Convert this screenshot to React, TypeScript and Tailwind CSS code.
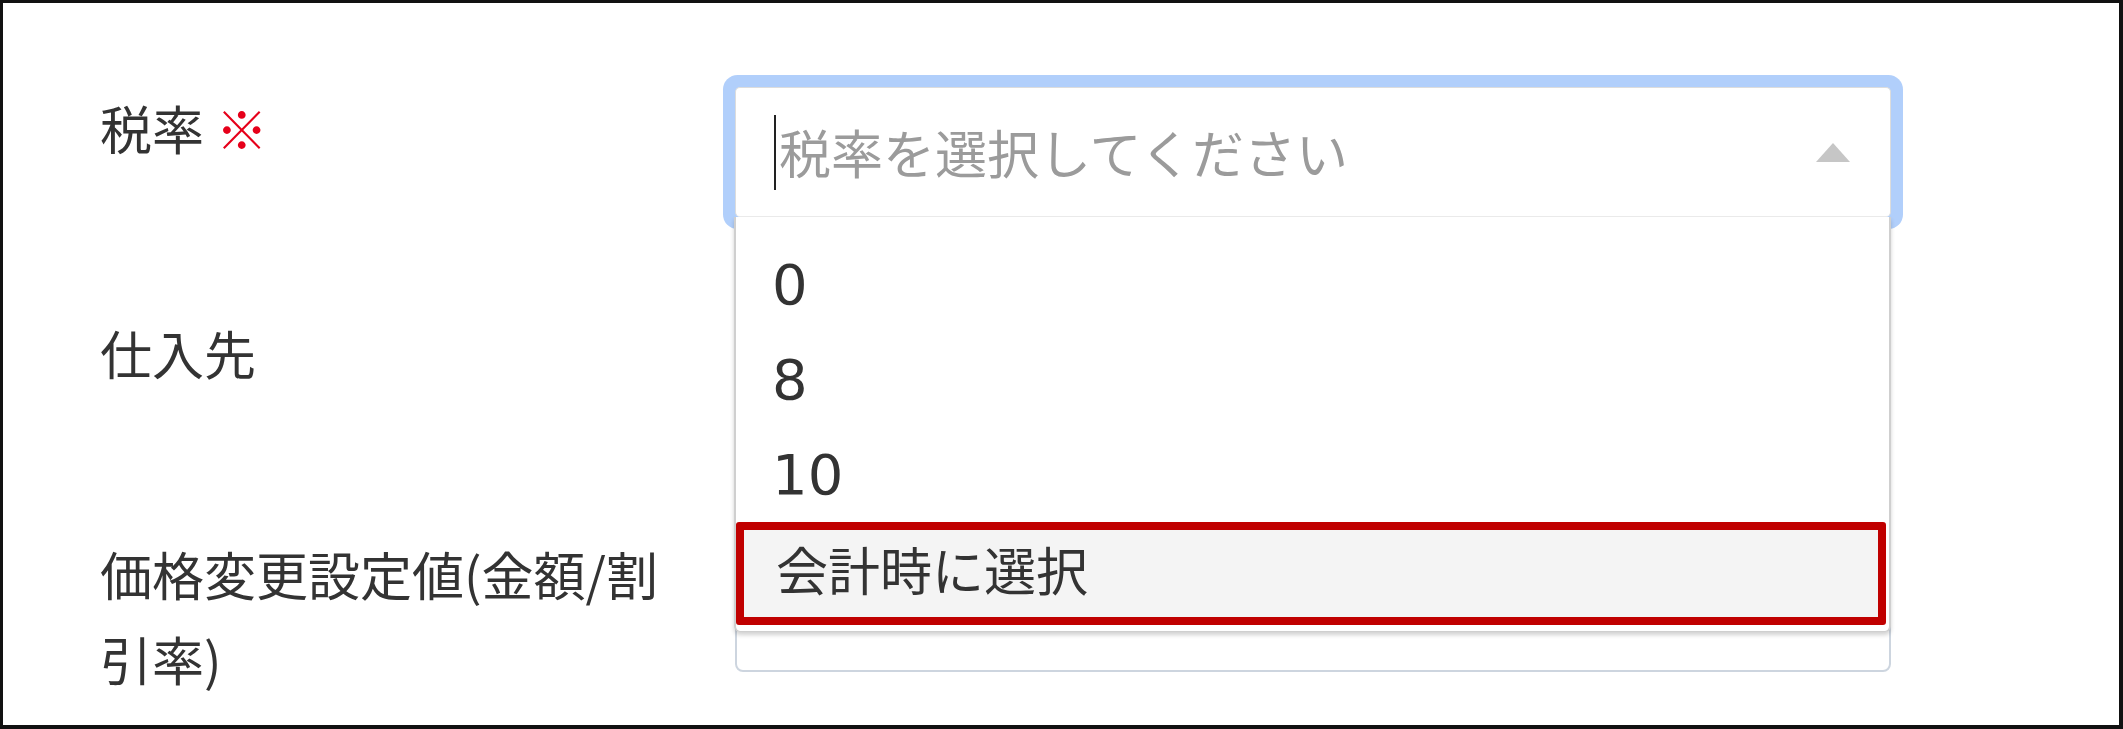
import React from 'react';

const options = ['0', '8', '10'];

/**
 * Tax rate form with its select open.
 */
export default function App() {
	return (
		<div className="w-[2123px] h-[729px] bg-white border-[3px] border-r-4 border-b-4 border-[#111] overflow-hidden font-['Noto_Sans_CJK_JP',sans-serif] text-[52px] text-[#333]">
			<div className="flex flex-col gap-[97.5px] pt-[84px] pl-[97px]">
				{/* Tax rate row. */}
				<div className="flex items-start">
					<label className="w-[635px] shrink-0 leading-[85px] mt-[-2px]">
						税率 <span className="text-[#e6001a]">※</span>
					</label>
					<div className="relative w-[1156px] h-[130px]">
						<div className="h-full flex items-center pl-[38px] pr-[40px] bg-white border border-[#dcdcdc] border-b-[#ececec] rounded-[5px] shadow-[0_0_0_12px_#b1cffb]">
							<span className="w-[2px] h-[75px] bg-[#222] shrink-0" />
							<span className="ml-[3px] flex-1 text-[#9b9b9b] leading-none">税率を選択してください</span>
							<svg width="34" height="19" viewBox="0 0 34 19" className="shrink-0">
								<polygon points="17,0 34,19 0,19" fill="#c6c6c6" />
							</svg>
						</div>

						{/* Open options list. */}
						<ul className="absolute z-10 top-[130px] left-[-1px] w-[1157px] bg-white border-x-2 border-b border-[#cfcfcf] rounded-b-[6px] shadow-[0_3px_4px_rgba(0,0,0,0.18)] pt-[20px] pb-[6px]">
							{options.map( ( option ) => (
								<li
									key={option}
									className="h-[95px] flex items-center pl-[36px] font-['DejaVu_Sans',sans-serif] text-[56px] text-[#333]"
								>
									{option}
								</li>
							) )}
							<li className="mr-[3px] h-[103px] flex items-center pl-[32px] pb-[9px] border-[8px] border-[#c00000] rounded-[3px] bg-[#f4f4f4] text-[#333]">
								会計時に選択
							</li>
						</ul>
					</div>
				</div>

				{/* Supplier row. */}
				<div className="flex items-start">
					<label className="w-[635px] shrink-0 leading-[85px] mt-[-5px]">仕入先</label>
					<div className="w-[1156px] h-[130px] border-2 border-[#cdd5df] rounded-[8px]" />
				</div>

				{/* Price change row. */}
				<div className="flex items-start">
					<label className="w-[635px] shrink-0 leading-[85px] mt-[-11px]">
						<span className="block w-[590px]">価格変更設定値(金額/割引率)</span>
					</label>
					<div className="w-[1156px] h-[130px] border-2 border-[#cdd5df] rounded-[8px]" />
				</div>
			</div>
		</div>
	);
}
